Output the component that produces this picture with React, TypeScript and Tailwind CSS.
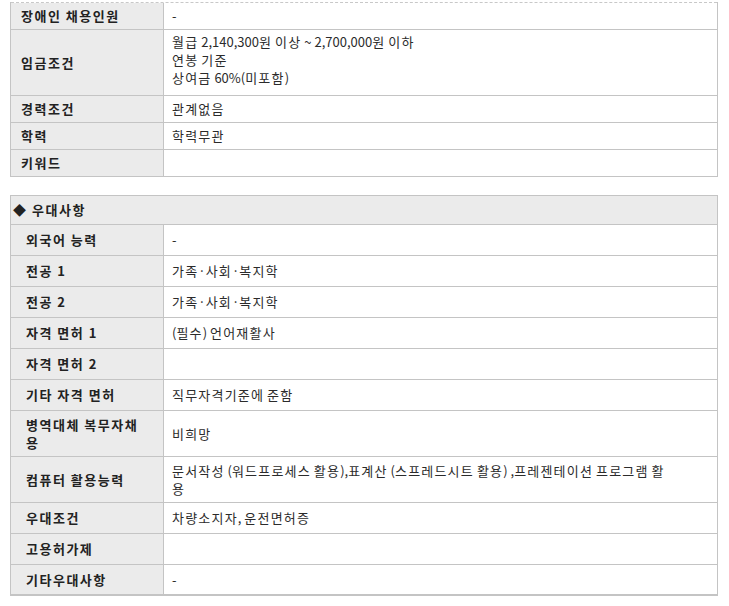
import React from "react";

const font = { fontFamily: '"Noto Sans CJK KR", "Noto Sans", sans-serif' };

function T({ s }: { s: string }) {
  const parts = s.split(/([\uAC00-\uD7A3]+)/);
  return (
    <span className="whitespace-pre">
      {parts.map((p, i) =>
        /[\uAC00-\uD7A3]/.test(p) ? (
          <span key={i} className="tracking-[1.2px]">{p}</span>
        ) : (
          <span key={i}>{p}</span>
        )
      )}
    </span>
  );
}

function Row1({ label, children, h = "h-[27px]", top = false }: { label: string; children?: React.ReactNode; h?: string; top?: boolean }) {
  return (
    <div className={`grid grid-cols-[153px_1fr] border-b border-[#c4c4c4] ${h}`}>
      <div className="flex items-center bg-[#ebebeb] border-r border-[#c4c4c4] pl-[10px] font-bold tracking-[1.5px] text-[#222]">{label}</div>
      <div className={`flex ${top ? "items-start pt-[3px]" : "items-center"} pl-[8px] text-[#2b2b2b]`}>{children}</div>
    </div>
  );
}

function Row2({ label, children, h = "h-[31px]", last = false }: { label: React.ReactNode; children?: React.ReactNode; h?: string; last?: boolean }) {
  return (
    <div className={`grid grid-cols-[153px_1fr] ${last ? "border-b-2" : "border-b"} border-[#c4c4c4] ${h}`}>
      <div className="flex items-center bg-[#ebebeb] border-r border-[#c4c4c4] pl-[15px] font-bold tracking-[1.5px] text-[#222]">{label}</div>
      <div className="flex items-center pl-[8px] text-[#2b2b2b]">{children}</div>
    </div>
  );
}

export default function App() {
  return (
    <div className="bg-white w-[729px] h-[606px] pt-[2px] text-[13px] leading-[18px]" style={font}>
      <div className="ml-[10px] w-[708px] border-l border-r border-[#c4c4c4]">
        <div className="border-t border-dashed border-[#c8c8c8]" />
        <Row1 label="장애인 채용인원">-</Row1>
        <Row1 label="임금조건" h="h-[66px]" top>
          <div>
            <div><T s="월급 2,140,300원 이상 ~ 2,700,000원 이하" /></div>
            <div><T s="연봉 기준" /></div>
            <div><T s="상여금 60%(미포함)" /></div>
          </div>
        </Row1>
        <Row1 label="경력조건"><T s="관계없음" /></Row1>
        <Row1 label="학력"><T s="학력무관" /></Row1>
        <Row1 label="키워드" />
      </div>

      <div className="ml-[10px] mt-[18px] w-[708px] border-l border-r border-t border-[#c4c4c4]">
        <div className="h-[29px] flex items-center bg-[#ebebeb] border-b border-[#c4c4c4] pl-[2px] font-bold tracking-[1.5px] text-[#222]">
          <span className="text-[13px] w-[19px] tracking-normal">◆</span>
          <span>우대사항</span>
        </div>
        <Row2 label="외국어 능력">-</Row2>
        <Row2 label="전공 1"><T s="가족·사회·복지학" /></Row2>
        <Row2 label="전공 2"><T s="가족·사회·복지학" /></Row2>
        <Row2 label="자격 면허 1"><T s="(필수) 언어재활사" /></Row2>
        <Row2 label="자격 면허 2" />
        <Row2 label="기타 자격 면허"><T s="직무자격기준에 준함" /></Row2>
        <Row2
          h="h-[46px]"
          label={
            <div>
              <div className="whitespace-nowrap">병역대체 복무자채</div>
              <div>용</div>
            </div>
          }
        >
          <T s="비희망" />
        </Row2>
        <Row2 label="컴퓨터 활용능력" h="h-[46px]">
          <div>
            <div className="whitespace-nowrap"><T s="문서작성 (워드프로세스 활용),표계산 (스프레드시트 활용) ,프레젠테이션 프로그램 활" /></div>
            <div><T s="용" /></div>
          </div>
        </Row2>
        <Row2 label="우대조건"><T s="차량소지자, 운전면허증" /></Row2>
        <Row2 label="고용허가제" />
        <Row2 label="기타우대사항" h="h-[31px]" last>-</Row2>
      </div>
    </div>
  );
}
